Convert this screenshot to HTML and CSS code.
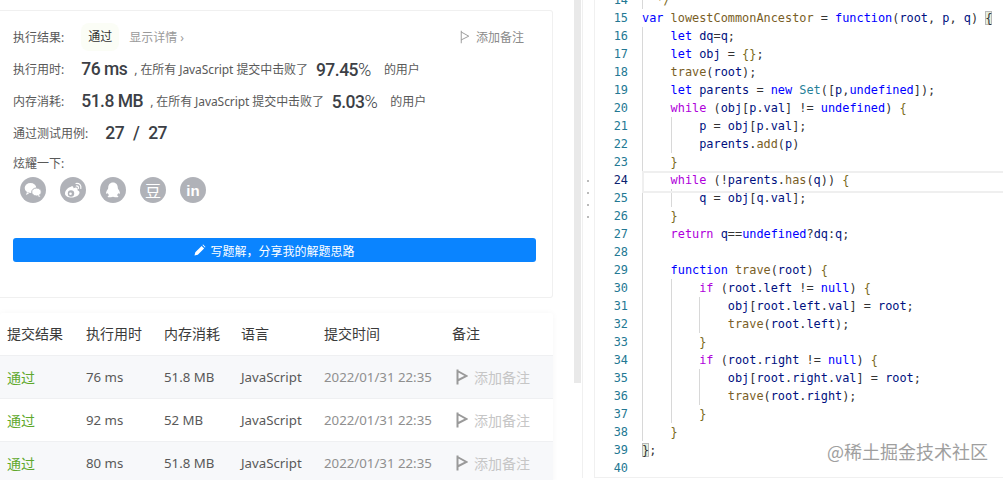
FILE: index.html
```html
<!DOCTYPE html>
<html lang="zh">
<head>
<meta charset="utf-8">
<title>提交结果</title>
<link rel="stylesheet" href="styles.css">
</head>
<body>
<svg class="defs" width="0" height="0">
  <symbol id="flag" viewBox="0 0 12 16"><path d="M1.500 0.500V15.500M1.500 2L10.500 7L1.500 11.500" fill="none" stroke="currentColor"/></symbol>
</svg>
<div class="app">
  <section class="results">
    <div class="content">
      <div class="card">
        <div class="row row-status">
          <span class="label">执行结果:</span>
          <span class="pass">通过</span>
          <span class="detail">显示详情 ›</span>
          <span class="note"><svg class="flag"><use href="#flag"/></svg>添加备注</span>
        </div>
        <div class="row">
          <span class="label label-gap">执行用时:</span>
          <b class="metric">76 ms</b>
          <span class="desc">, 在所有 JavaScript 提交中击败了</span>
          <b class="metric pct">97.45<i>%</i></b>
          <span class="desc">的用户</span>
        </div>
        <div class="row">
          <span class="label label-gap">内存消耗:</span>
          <b class="metric">51.8 MB</b>
          <span class="desc">, 在所有 JavaScript 提交中击败了</span>
          <b class="metric pct">5.03<i>%</i></b>
          <span class="desc">的用户</span>
        </div>
        <div class="row">
          <span class="label label-gap">通过测试用例:</span>
          <b class="metric metric-ratio">27 / 27</b>
        </div>
        <div class="share-title">炫耀一下:</div>
        <div class="share">
          <span class="social"><svg viewBox="0 0 26 26" width="26" height="26"><ellipse cx="10.500" cy="11" rx="5.800" ry="5" fill="#fff"/><path d="M7 15l-1 3 3-1.600z" fill="#fff"/><ellipse cx="16.500" cy="15" rx="4.800" ry="4" fill="#fff" stroke="#b0b2b8" stroke-width="1"/><path d="M19 18l1.400 2-3-1z" fill="#fff"/></svg></span>
          <span class="social"><svg viewBox="0 0 26 26" width="26" height="26"><path d="M11.500 9.500c-3.500 1-6.500 4-6.500 7 0 2.500 3 4 6.500 4 4.500 0 8-2.500 8-5 0-1.500-1.500-2-2-2.300.5-1.500 0-3-2.500-2.500l-1.500.5c0-2-1-2.400-2.500-1.700z" fill="#fff"/><circle cx="11" cy="16.500" r="3.200" fill="#b0b2b8"/><circle cx="10.500" cy="16.700" r="1.300" fill="#fff"/><path d="M16 6.500c3.500-.5 5.500 2 4.800 5M16.300 9c1.600-.2 2.400.8 2.100 2.300" fill="none" stroke="#fff" stroke-width="1.200" stroke-linecap="round"/></svg></span>
          <span class="social"><svg viewBox="0 0 26 26" width="26" height="26"><path d="M13 5.500c-3.200 0-4.800 2.500-4.800 5.300 0 .8-.2 1.200-.8 2-1 1.400-1.600 3-1.200 3.800.3.500 1 .1 1.500-.7.300 1 .8 1.700 1.500 2.300-1 .4-1.700.9-1.500 1.500.2.700 2 .8 3.300.5.800-.2 1.200-.4 2-.4s1.200.2 2 .4c1.300.3 3.100.2 3.300-.5.200-.6-.5-1.100-1.500-1.500.7-.6 1.200-1.300 1.500-2.300.5.800 1.200 1.200 1.500.7.400-.8-.2-2.400-1.200-3.800-.6-.8-.8-1.200-.8-2 0-2.800-1.600-5.300-4.800-5.300z" fill="#fff"/></svg></span>
          <span class="social social-text">豆</span>
          <span class="social social-in">in</span>
        </div>
        <button class="write" type="button"><svg class="pencil" viewBox="0 0 12 12" width="12" height="12"><path d="M0.500 11.500l.8-3.300 6.300-6.300 2.500 2.500-6.300 6.300zM8.400 1.100l.7-.6 2.400 2.400-.6.700z" fill="#fff"/></svg>写题解，分享我的解题思路</button>
      </div>
      <div class="table">
        <div class="tr th"><span>提交结果</span><span>执行用时</span><span>内存消耗</span><span>语言</span><span>提交时间</span><span>备注</span></div>
        <div class="tr odd"><a class="ok">通过</a><span class="num">76 ms</span><span class="num">51.8 MB</span><span class="num">JavaScript</span><span class="num time">2022/01/31 22:35</span><span class="add"><svg class="flag-lg"><use href="#flag"/></svg>添加备注</span></div>
        <div class="tr"><a class="ok">通过</a><span class="num">92 ms</span><span class="num">52 MB</span><span class="num">JavaScript</span><span class="num time">2022/01/31 22:35</span><span class="add"><svg class="flag-lg"><use href="#flag"/></svg>添加备注</span></div>
        <div class="tr odd"><a class="ok">通过</a><span class="num">80 ms</span><span class="num">51.8 MB</span><span class="num">JavaScript</span><span class="num time">2022/01/31 22:35</span><span class="add"><svg class="flag-lg"><use href="#flag"/></svg>添加备注</span></div>
      </div>
    </div>
    <div class="thumb"></div>
  </section>
  <div class="splitter"><i></i><i></i><i></i><i></i></div>
  <section class="editor">
    <div class="gutter">
      <div>14</div><div>15</div><div>16</div><div>17</div><div>18</div><div>19</div><div>20</div><div>21</div><div>22</div><div>23</div><div class="cur">24</div><div>25</div><div>26</div><div>27</div><div>28</div><div>29</div><div>30</div><div>31</div><div>32</div><div>33</div><div>34</div><div>35</div><div>36</div><div>37</div><div>38</div><div>39</div><div>40</div>
    </div>
    <div class="code">
      <div class="guide"><div class="ln"><span class="b">  */</span></div></div>
      <div class="ln"><span class="k">var</span> <span class="f">lowestCommonAncestor</span> = <span class="k">function</span>(<span class="v">root</span>, <span class="v">p</span>, <span class="v">q</span>) <span class="m">{</span></div>
      <div class="guide">
        <div class="in">
          <div class="ln"><span class="k">let</span> <span class="v">dq</span>=<span class="v">q</span>;</div>
          <div class="ln"><span class="k">let</span> <span class="v">obj</span> = <span class="b">{}</span>;</div>
          <div class="ln"><span class="f">trave</span>(<span class="v">root</span>);</div>
          <div class="ln"><span class="k">let</span> <span class="v">parents</span> = <span class="k">new</span> <span class="t">Set</span>([<span class="v">p</span>,<span class="k">undefined</span>]);</div>
          <div class="ln"><span class="c">while</span> (<span class="v">obj</span>[<span class="v">p</span>.<span class="v">val</span>] != <span class="k">undefined</span>) <span class="b">{</span></div>
          <div class="guide">
            <div class="in">
              <div class="ln"><span class="v">p</span> = <span class="v">obj</span>[<span class="v">p</span>.<span class="v">val</span>];</div>
              <div class="ln"><span class="v">parents</span>.<span class="f">add</span>(<span class="v">p</span>)</div>
            </div>
          </div>
          <div class="ln"><span class="b">}</span></div>
          <div class="ln active"><span class="c">while</span> (!<span class="v">parents</span>.<span class="f">has</span>(<span class="v">q</span>)) <span class="b">{</span></div>
          <div class="guide"><div class="in"><div class="ln"><span class="v">q</span> = <span class="v">obj</span>[<span class="v">q</span>.<span class="v">val</span>];</div></div></div>
          <div class="ln"><span class="b">}</span></div>
          <div class="ln"><span class="c">return</span> <span class="v">q</span>==<span class="k">undefined</span>?<span class="v">dq</span>:<span class="v">q</span>;</div>
          <div class="ln">&nbsp;</div>
          <div class="ln"><span class="k">function</span> <span class="f">trave</span>(<span class="v">root</span>) <span class="b">{</span></div>
          <div class="guide">
            <div class="in">
              <div class="ln"><span class="c">if</span> (<span class="v">root</span>.<span class="v">left</span> != <span class="k">null</span>) <span class="b">{</span></div>
              <div class="guide"><div class="in">
                <div class="ln"><span class="v">obj</span>[<span class="v">root</span>.<span class="v">left</span>.<span class="v">val</span>] = <span class="v">root</span>;</div>
                <div class="ln"><span class="f">trave</span>(<span class="v">root</span>.<span class="v">left</span>);</div>
              </div></div>
              <div class="ln"><span class="b">}</span></div>
              <div class="ln"><span class="c">if</span> (<span class="v">root</span>.<span class="v">right</span> != <span class="k">null</span>) <span class="b">{</span></div>
              <div class="guide"><div class="in">
                <div class="ln"><span class="v">obj</span>[<span class="v">root</span>.<span class="v">right</span>.<span class="v">val</span>] = <span class="v">root</span>;</div>
                <div class="ln"><span class="f">trave</span>(<span class="v">root</span>.<span class="v">right</span>);</div>
              </div></div>
              <div class="ln"><span class="b">}</span></div>
            </div>
          </div>
          <div class="ln"><span class="b">}</span></div>
        </div>
      </div>
      <div class="ln"><span class="m">}</span>;</div>
      <div class="ln">&nbsp;</div>
    </div>
    <div class="mark">@稀土掘金技术社区</div>
  </section>
</div>
</body>
</html>
```

FILE: styles.css
```css
* { box-sizing: border-box; }
html, body { margin: 0; height: 480px; overflow: hidden; background: #fff; }
body { font-family: "Noto Sans", "Noto Sans CJK SC", sans-serif; color: #595959; }
.defs { position: absolute; }
.app { display: flex; height: 480px; }

/* left pane */
.results { width: 583px; flex: none; display: flex; align-items: flex-start; border-right: 1px solid #f0f0f0; height: 478px; }
.content { width: 553px; flex: none; padding-top: 10px; }
.thumb { width: 7px; height: 383px; margin-left: 21px; background: #e9e9e9; }

.card { height: 288px; padding: 10px 16px 0 13px; border: 1px solid #f0f0f0; border-left: 0; border-radius: 0 3px 3px 0; }
.row { display: flex; align-items: center; height: 32px; font-size: 12px; }
.label { color: #595959; white-space: nowrap; }
.label-gap { margin-right: 17px; }
.pass { margin-left: 17px; width: 38px; height: 28px; line-height: 28px; text-align: center; color: #333; background: #fbfdf6; border-radius: 8px; }
.detail { margin-left: 10px; color: #9a9a9a; white-space: pre; }
.note { margin-left: auto; display: flex; align-items: center; color: #8a8a8a; margin-right: 12px; }
.flag { width: 10px; height: 14px; margin-right: 6px; color: #8c8c8c; }
.metric { font-family: "Roboto", sans-serif; font-weight: 500; font-size: 17.500px; letter-spacing: -.5px; color: #3c3f46; white-space: pre; }
.metric-ratio { word-spacing: 5px; }
.metric i { font-style: normal; font-weight: 300; font-size: 18px; }
.pct { margin: 0 13px 0 8px; }
.desc { margin-left: 7px; white-space: nowrap; letter-spacing: -.08px; }
.pct + .desc { margin-left: 0; }
.share-title { margin-top: 5px; font-size: 12px; line-height: 20px; }
.share { display: flex; gap: 14px; margin: 3px 0 0 7px; }
.social { display: flex; align-items: center; justify-content: center; width: 26px; height: 26px; border-radius: 50%; background: #b0b2b8; color: #fff; }
.social-text { font-size: 16px; }
.social-in { font-family: "Liberation Sans", sans-serif; font-weight: 700; font-size: 15px; }
.write { display: flex; align-items: center; justify-content: center; gap: 4px; width: 523px; height: 24px; margin-top: 35px; padding: 0; border: 0; border-radius: 3px; background: #0a84ff; color: #fff; font: 12px "Noto Sans CJK SC", sans-serif; }

.table { margin-top: 15px; box-shadow: 0 0 6px rgba(0,0,0,.04); border-radius: 3px; }
.tr { display: grid; grid-template-columns: 79px 78px 77px 83px 128px 1fr; align-items: center; height: 43px; padding-left: 7px; font-size: 14px; color: #595959; border-top: 1px solid #eff0f2; white-space: nowrap; }
.th { height: 42px; padding-bottom: 3px; color: #3a3a3a; border-top: 0; }
.odd { background: #f7f8fa; }
.num { font-size: 13.250px; }
.ok { color: #5fa82c; }
.time { color: #8f8f8f; }
.add { display: flex; align-items: center; color: #c6c6c6; padding-left: 4px; }
.flag-lg { width: 12px; height: 16px; margin-right: 6px; color: #9a9a9a; stroke-width: 2; }

/* splitter */
.splitter { width: 11px; flex: none; display: flex; flex-direction: column; align-items: center; justify-content: center; gap: 10px; padding-right: 1px; height: 397px; }
.splitter i { width: 2px; height: 2px; background: #bbb; }

/* editor */
.editor { position: relative; flex: 1; display: flex; height: 478px; border-left: 1px solid #f0f0f0; border-bottom: 1px solid #f0f0f0; font: 11.880px/18px "DejaVu Sans Mono", monospace; color: #333; overflow: hidden; }
.gutter { width: 47px; flex: none; margin-top: -9px; padding-right: 14px; text-align: right; color: #237893; }
.gutter .cur { color: #0b216f; }
.code { flex: 1; margin-top: -9px; }
.ln { height: 18px; white-space: pre; }
.guide { box-shadow: inset 1px 0 #d8d8d8; }
.in { margin-left: 4ch; }
.active { position: relative; }
.active::before { content: ""; position: absolute; left: -29px; right: 0; top: 0; height: 18px; border: 2px solid #efefef; border-right: 0; }
.k { color: #0000ff; }
.c { color: #af00db; }
.f { color: #795e26; }
.v { color: #001080; }
.t { color: #267f99; }
.b { color: #7a6a1a; }
.m { color: #333; background: #e6efe0; box-shadow: inset 0 0 0 1px #b9b9b9; }
.mark { position: absolute; right: 15px; bottom: 14px; font: 18px/24px "Noto Sans CJK SC", sans-serif; color: #8f8f8f; text-shadow: 0 0 2px #fff; opacity: .85; }
```
